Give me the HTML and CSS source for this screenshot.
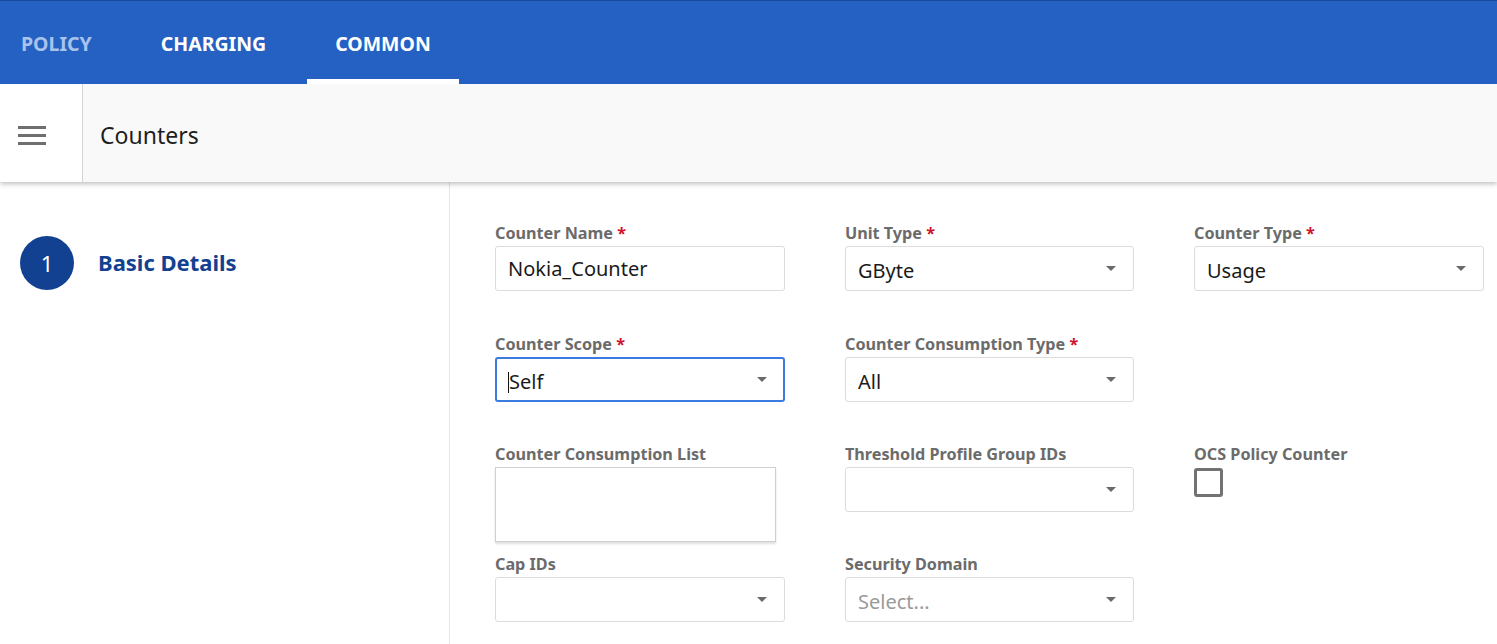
FILE: index.html
```html
<!DOCTYPE html>
<html>
<head>
<meta charset="utf-8">
<link rel="stylesheet" href="styles.css">
</head>
<body>
<header class="topnav">
  <nav class="tabs">
    <a class="tab tab-dim">POLICY</a>
    <a class="tab">CHARGING</a>
    <a class="tab tab-active">COMMON</a>
  </nav>
</header>
<div class="subbar">
  <div class="menu-cell">
    <span class="burger"><i></i><i></i><i></i></span>
  </div>
  <div class="page-title">Counters</div>
</div>
<main class="content">
  <aside class="steps">
    <div class="step">
      <span class="step-num">1</span>
      <span class="step-label">Basic Details</span>
    </div>
  </aside>
  <section class="form">
    <div class="field">
      <label class="lbl">Counter Name <span class="req">*</span></label>
      <div class="input"><span class="val">Nokia_Counter</span></div>
    </div>
    <div class="field">
      <label class="lbl">Unit Type <span class="req">*</span></label>
      <div class="input select"><span class="val">GByte</span><span class="caret"></span></div>
    </div>
    <div class="field">
      <label class="lbl">Counter Type <span class="req">*</span></label>
      <div class="input select"><span class="val">Usage</span><span class="caret"></span></div>
    </div>

    <div class="field">
      <label class="lbl">Counter Scope <span class="req">*</span></label>
      <div class="input select focused"><span class="val"><span class="cursor"></span>Self</span><span class="caret"></span></div>
    </div>
    <div class="field">
      <label class="lbl">Counter Consumption Type <span class="req">*</span></label>
      <div class="input select"><span class="val">All</span><span class="caret"></span></div>
    </div>
    <div class="field"></div>

    <div class="field">
      <label class="lbl">Counter Consumption List</label>
      <div class="textarea"></div>
    </div>
    <div class="field">
      <label class="lbl">Threshold Profile Group IDs</label>
      <div class="input select"><span class="val"></span><span class="caret"></span></div>
    </div>
    <div class="field">
      <label class="lbl">OCS Policy Counter</label>
      <span class="checkbox"></span>
    </div>

    <div class="field">
      <label class="lbl">Cap IDs</label>
      <div class="input select"><span class="val"></span><span class="caret"></span></div>
    </div>
    <div class="field">
      <label class="lbl">Security Domain</label>
      <div class="input select"><span class="val placeholder">Select...</span><span class="caret"></span></div>
    </div>
    <div class="field"></div>
  </section>
</main>
</body>
</html>
```
FILE: styles.css
```css
* { box-sizing: border-box; }
html, body { margin: 0; padding: 0; }
body {
  font-family: "Noto Sans", "Open Sans", sans-serif;
  background: #ffffff;
  color: #222;
  width: 1497px;
  height: 644px;
  overflow: hidden;
}

.topnav {
  height: 84px;
  background: #2561c2;
  border-top: 1px solid #1a4a9e;
  position: relative;
  z-index: 2;
}
.tabs {
  display: flex;
  height: 100%;
  gap: 13px;
  margin-left: -7px;
}
.tab {
  display: flex;
  align-items: center;
  padding: 7px 28px 0;
  height: 100%;
  font-size: 19.5px;
  font-weight: 700;
  color: #ffffff;
  border-bottom: 5px solid transparent;
}
.tab-dim { color: #a9c3ec; }
.tab-active { border-bottom-color: #ffffff; }

.subbar {
  display: flex;
  height: 98px;
  background: #f9f9f9;
  box-shadow: 0 2px 5px rgba(0,0,0,0.25);
  position: relative;
  z-index: 1;
}
.menu-cell {
  width: 83px;
  background: #ffffff;
  border-right: 1px solid #d3d3d3;
  display: flex;
  align-items: center;
  padding-left: 18px;
  padding-top: 4px;
}
.burger {
  display: flex;
  flex-direction: column;
  gap: 5px;
  width: 28px;
}
.burger i {
  display: block;
  height: 3px;
  background: #6f6f6f;
}
.page-title {
  display: flex;
  align-items: center;
  padding-left: 17px;
  padding-top: 4px;
  font-size: 23px;
  color: #1e1e1e;
}

.content {
  display: flex;
  height: 462px;
}
.steps {
  width: 450px;
  border-right: 1px solid #e6e6e6;
  padding: 54px 0 0 20px;
}
.step {
  display: flex;
  align-items: center;
  gap: 24px;
}
.step-num {
  width: 54px;
  height: 54px;
  border-radius: 50%;
  background: #124191;
  color: #ffffff;
  font-size: 22px;
  display: flex;
  align-items: center;
  justify-content: center;
}
.step-label {
  font-size: 22px;
  font-weight: 700;
  color: #124191;
  margin-top: -2px;
}

.form {
  display: grid;
  grid-template-columns: 290px 289px 290px;
  grid-template-rows: 111px 110px 110px 110px;
  column-gap: 60px;
  padding: 41px 0 0 45px;
}
.field {
  display: flex;
  flex-direction: column;
  align-items: flex-start;
}
.lbl {
  font-size: 16.2px;
  font-weight: 700;
  color: #6b6b6b;
  line-height: 20px;
  margin-bottom: 3px;
  white-space: nowrap;
}
.req { color: #d0102a; }
.input {
  width: 100%;
  height: 45px;
  border: 1px solid #dcdcdc;
  border-radius: 3px;
  display: flex;
  align-items: center;
  padding: 0 17px 0 12px;
  font-size: 20px;
  color: #1a1a1a;
  background: #fff;
}
.input.select { padding-top: 4px; }
.val { flex: 1; position: relative; }
.placeholder { color: #9a9a9a; }
.caret {
  width: 0;
  height: 0;
  border-left: 5px solid transparent;
  border-right: 5px solid transparent;
  border-top: 5px solid #6a6a6a;
  margin-top: -5px;
}
.input.focused {
  border: 2px solid #3b7ae0;
  padding-left: 11px;
  padding-right: 16px;
}
.cursor {
  display: inline-block;
  width: 1px;
  height: 21px;
  background: #111;
  vertical-align: -4px;
}
.textarea {
  width: 281px;
  height: 75px;
  border: 1px solid #cfcfcf;
  box-shadow: 0 2px 2px rgba(0,0,0,0.12);
  background: #fff;
}
.checkbox {
  width: 29px;
  height: 29px;
  border: 3px solid #727272;
  border-radius: 3px;
  margin-top: 1px;
}
```
